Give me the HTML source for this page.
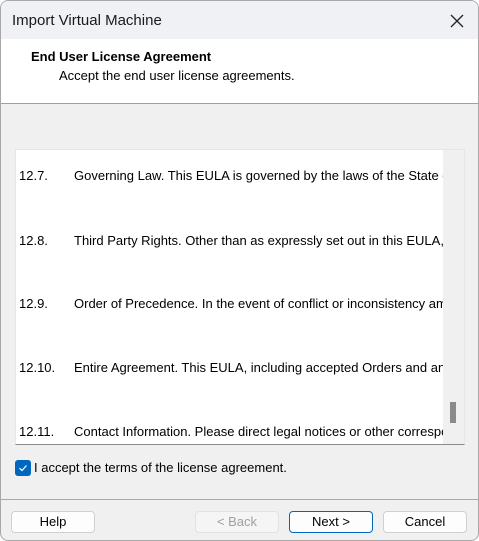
<!DOCTYPE html>
<html><head><style>
*{margin:0;padding:0;box-sizing:border-box}
body{width:479px;height:541px;background:#fff;font-family:"Liberation Sans",sans-serif;font-size:13px;color:#000;position:relative;overflow:hidden}
.win{position:absolute;left:0;top:0;width:479px;height:541px;border:1px solid #a8a8a8;border-radius:8px;background:#f0f0f0;overflow:hidden}
.title{position:absolute;left:0;top:0;width:100%;height:38px;background:#eff1f4}
.title span{position:absolute;left:11px;top:11px;font-size:15px;color:#1a1a1a}
.x{position:absolute;left:449px;top:13px}
.hdr{position:absolute;left:0;top:38px;width:100%;height:65px;background:#fff;border-bottom:1px solid #a0a0a0}
.h1{position:absolute;left:30px;top:10px;font-weight:bold;font-size:13px}
.h2{position:absolute;left:58px;top:29px;font-size:13px}
.box{position:absolute;left:14px;top:148px;width:450px;height:296px;background:#fff;border:1px solid #e6e6e6;border-bottom:1px solid #8a8a8a;overflow:hidden}
.sb{position:absolute;right:0;top:0;width:21px;height:100%;background:#f0f0f0}
.th{position:absolute;left:7px;top:252px;width:6px;height:21px;background:#8a8a8a}
.row{position:absolute;left:3px;white-space:nowrap;width:425px;overflow:hidden}
.row b{font-weight:normal;display:inline-block;width:55px}
.cb{position:absolute;left:14px;top:459px;width:16px;height:16px;background:#0067c0;border-radius:3px}
.cbl{position:absolute;left:33px;top:459px;font-size:13px}
.sep{position:absolute;left:0;top:498px;width:100%;border-top:1px solid #a8a8a8}
.btn{position:absolute;top:510px;width:84px;height:22px;background:#fdfdfd;border:1px solid #d0d0d0;border-radius:4px;text-align:center;line-height:20px;font-size:13px}
</style></head><body>
<div class="win">
<div class="title"><span>Import Virtual Machine</span>
<svg class="x" width="14" height="14" viewBox="0 0 14 14"><path d="M1 1L13 13M13 1L1 13" stroke="#222" stroke-width="1.3"/></svg></div>
<div class="hdr"><div class="h1">End User License Agreement</div><div class="h2">Accept the end user license agreements.</div></div>
<div class="box">
<div class="row" style="top:18px"><b>12.7.</b>Governing Law. This EULA is governed by the laws of the State of California</div>
<div class="row" style="top:83px"><b>12.8.</b>Third Party Rights. Other than as expressly set out in this EULA, third parties</div>
<div class="row" style="top:146px"><b>12.9.</b>Order of Precedence. In the event of conflict or inconsistency among</div>
<div class="row" style="top:210px"><b>12.10.</b>Entire Agreement. This EULA, including accepted Orders and any other</div>
<div class="row" style="top:274px"><b>12.11.</b>Contact Information. Please direct legal notices or other correspondence</div>
<div class="sb"><div class="th"></div></div>
</div>
<div class="cb"><svg width="16" height="16" viewBox="0 0 16 16"><path d="M4.5 8.2L7 10.5L11.5 5.5" fill="none" stroke="#fff" stroke-width="1.2"/></svg></div>
<div class="cbl">I accept the terms of the license agreement.</div>
<div class="sep"></div>
<div class="btn" style="left:10px">Help</div>
<div class="btn" style="left:194px;color:#a0a0a0;background:#f5f5f5;border-color:#e2e2e2">&lt; Back</div>
<div class="btn" style="left:288px;border-color:#0067c0">Next &gt;</div>
<div class="btn" style="left:382px">Cancel</div>
</div>
</body></html>
